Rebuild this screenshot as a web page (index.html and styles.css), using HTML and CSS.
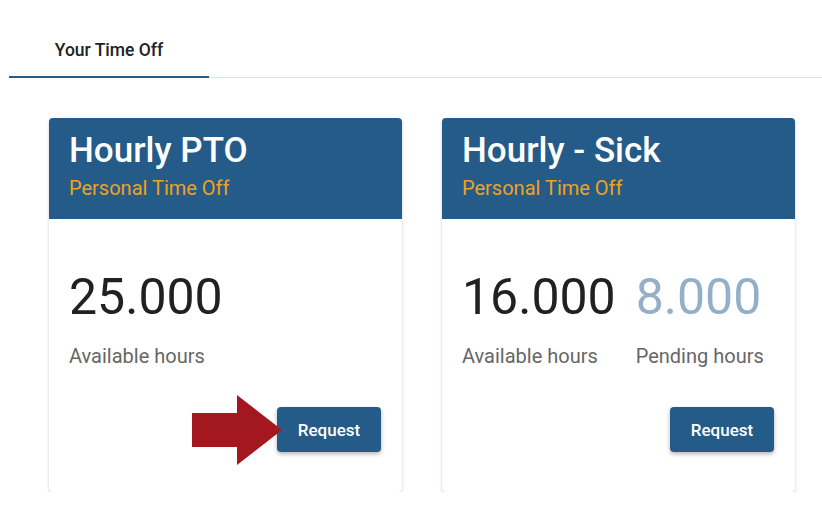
FILE: index.html
```html
<!DOCTYPE html>
<html lang="en">
<head>
  <meta charset="UTF-8">
  <title>Your Time Off</title>
  <link rel="stylesheet" href="styles.css">
</head>
<body>

  <div class="tabs">
    <div class="tab active">Your Time Off</div>
  </div>

  <div class="cards">
    <div class="card">
      <div class="card-head">
        <h2>Hourly PTO</h2>
        <div class="subtitle">Personal Time Off</div>
      </div>
      <div class="card-body">
        <div class="stats">
          <div class="stat">
            <div class="num">25.000</div>
            <div class="label">Available hours</div>
          </div>
        </div>
        <div class="actions">
          <svg class="arrow" width="90" height="70" viewBox="0 0 90 70">
            <polygon points="0,18 45,18 45,0 90,35 45,70 45,52 0,52" fill="#a3171f"/>
          </svg>
          <button class="btn">Request</button>
        </div>
      </div>
    </div>

    <div class="card">
      <div class="card-head">
        <h2>Hourly - Sick</h2>
        <div class="subtitle">Personal Time Off</div>
      </div>
      <div class="card-body">
        <div class="stats">
          <div class="stat">
            <div class="num">16.000</div>
            <div class="label">Available hours</div>
          </div>
          <div class="stat pending">
            <div class="num">8.000</div>
            <div class="label">Pending hours</div>
          </div>
        </div>
        <div class="actions">
          <button class="btn">Request</button>
        </div>
      </div>
    </div>
  </div>

</body>
</html>
```

FILE: styles.css
```css
body {
  margin: 0;
  background-color: #fff;
  font-family: Roboto, Arial, sans-serif;
  color: #212121;
}

.tabs {
  margin: 24px 0 0 9px;
  border-bottom: 1px solid #e0e0e0;
  display: flex;
}

.tab {
  width: 200px;
  text-align: center;
  font-size: 17.5px;
  line-height: 20px;
  font-weight: 500;
  padding: 16px 0;
  color: #222;
}

.tab.active {
  border-bottom: 2px solid #255b88;
  margin-bottom: -1px;
}

.cards {
  display: flex;
  gap: 40px;
  padding: 40px 0 0 49px;
}

.card {
  width: 353px;
  border-radius: 4px;
  background-color: #fff;
  box-shadow: 0 1px 3px rgba(0,0,0,0.22);
}

.card-head {
  background-color: #255b88;
  border-radius: 4px 4px 0 0;
  padding: 12px 20px 19px;
}

.card-head h2 {
  margin: 0;
  font-size: 35px;
  line-height: 42px;
  font-weight: 500;
  color: #fff;
}

.subtitle {
  margin-top: 4px;
  font-size: 20px;
  line-height: 24px;
  color: #f0a21e;
}

.card-body {
  padding: 48px 21px 40px 20px;
}

.stats {
  display: flex;
  gap: 20px;
}

.num {
  font-size: 50px;
  line-height: 60px;
  color: #212121;
}

.label {
  margin-top: 17px;
  font-size: 20px;
  line-height: 24px;
  color: #666;
}

.pending .num {
  color: #94b0c9;
}

.actions {
  position: relative;
  display: flex;
  justify-content: flex-end;
  margin-top: 39px;
}

.btn {
  width: 104px;
  height: 45px;
  border: none;
  border-radius: 4px;
  background-color: #255b88;
  color: #fff;
  font-family: Roboto, Arial, sans-serif;
  font-size: 17px;
  font-weight: 500;
  box-shadow: 0 2px 4px rgba(0,0,0,0.3);
  cursor: pointer;
}

.arrow {
  position: absolute;
  left: 123px;
  top: -12px;
  z-index: 1;
}
```
